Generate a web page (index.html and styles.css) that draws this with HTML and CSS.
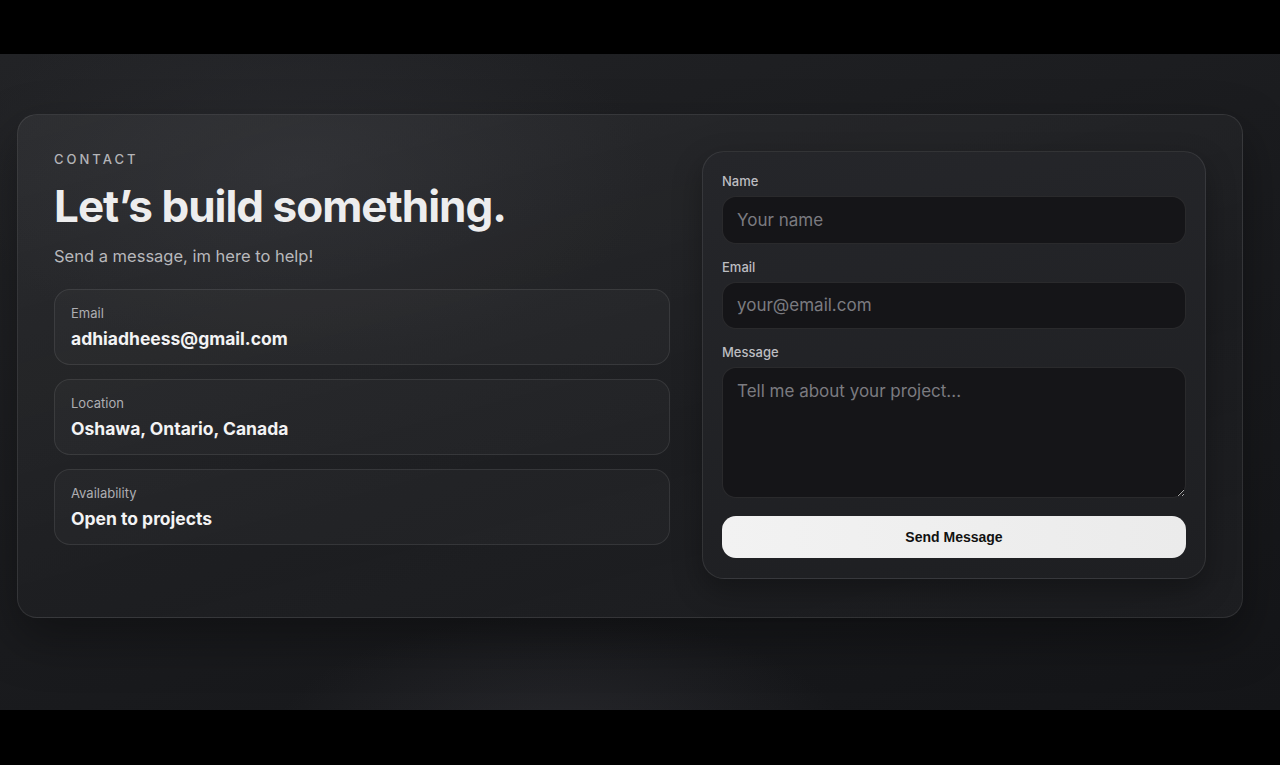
FILE: index.html
```html
<!DOCTYPE html>
<html lang="en">
<head>
    <meta charset="UTF-8">
    <meta name="viewport" content="width=device-width, initial-scale=1.0">
    <title>Contact</title>
    <link rel="stylesheet" href="styles.css">
</head>
<body>
    <section class="contact">
        <div class="card">
            <div class="intro">
                <p class="eyebrow">CONTACT</p>
                <h1>Let’s build something.</h1>
                <p class="lead">Send a message, im here to help!</p>

                <!-- Info tiles -->
                <div class="info-list">
                    <div class="info">
                        <span class="info-label">Email</span>
                        <span class="info-value">adhiadheess@gmail.com</span>
                    </div>
                    <div class="info">
                        <span class="info-label">Location</span>
                        <span class="info-value">Oshawa, Ontario, Canada</span>
                    </div>
                    <div class="info">
                        <span class="info-label">Availability</span>
                        <span class="info-value">Open to projects</span>
                    </div>
                </div>
            </div>

            <form class="form">
                <label for="name">Name</label>
                <input type="text" id="name" placeholder="Your name">

                <label for="email">Email</label>
                <input type="email" id="email" placeholder="your@email.com">

                <label for="message">Message</label>
                <textarea id="message" placeholder="Tell me about your project..."></textarea>

                <button type="submit">Send Message</button>
            </form>
        </div>
    </section>
</body>
</html>
```

FILE: styles.css
```css
* { box-sizing: border-box; margin: 0; }
body { background: #000; font-family: 'Inter', 'Noto Sans', sans-serif; color: #f1f1f1; }

.contact {
    margin: 54px 0 55px; height: 656px; padding: 60px 37px 0 17px;
    background:
        radial-gradient(ellipse 420px 200px at 560px 700px, rgba(60, 60, 66, 0.45), transparent 70%),
        radial-gradient(ellipse 500px 260px at 300px 120px, rgba(50, 51, 56, 0.5), transparent 70%),
        linear-gradient(160deg, #222326 0%, #1b1c1f 45%, #141518 100%);
}
.card {
    display: grid; grid-template-columns: 616px 504px; gap: 32px;
    height: 504px; padding: 36px 36px 0;
    border: 1px solid rgba(255, 255, 255, 0.09); border-radius: 20px;
    background: linear-gradient(165deg, rgba(255, 255, 255, 0.05), rgba(255, 255, 255, 0.015) 60%, rgba(255, 255, 255, 0.03));
    box-shadow: 0 20px 50px rgba(0, 0, 0, 0.35);
}

.eyebrow { font-size: 13px; font-weight: 500; letter-spacing: 3px; color: #b4b4b8; line-height: 16px; }
h1 { margin-top: 13px; font-size: 44px; font-weight: 700; letter-spacing: -1px; line-height: 52px; color: #ededee; }
.lead { margin-top: 13px; font-size: 16.5px; color: #b8b8bc; line-height: 22px; }

.info-list { display: grid; gap: 14px; margin-top: 22px; }
.info {
    display: flex; flex-direction: column; gap: 7px; height: 76px; padding: 15px 16px 0;
    border: 1px solid rgba(255, 255, 255, 0.09); border-radius: 16px;
    background: rgba(255, 255, 255, 0.025);
}
.info-label { font-size: 13px; color: #aeaeb2; line-height: 16px; }
.info-value { font-size: 17.5px; font-weight: 700; color: #f3f3f4; line-height: 22px; }

/* Form panel */
.form {
    display: flex; flex-direction: column; align-self: start;
    height: 428px; padding: 21px 19px 20px 19px;
    border: 1px solid rgba(255, 255, 255, 0.09); border-radius: 22px;
    background: linear-gradient(170deg, #25262a, #1e1f22);
    box-shadow: 0 12px 30px rgba(0, 0, 0, 0.3);
}
label { font-size: 13px; font-weight: 500; color: #bdbdc1; line-height: 16px; margin-bottom: 7px; }
input, textarea {
    width: 100%; padding: 12px 14px; font-family: inherit; font-size: 17px; color: #eee;
    background: #151518; border: 1px solid rgba(255, 255, 255, 0.09); border-radius: 14px; outline: none;
}
input { height: 48px; margin-bottom: 15px; }
textarea { height: 133px; resize: vertical; line-height: 22px; padding-top: 12px; }
input::placeholder, textarea::placeholder { color: #7b7b80; }

button {
    margin-top: 18px; height: 43px; border: none; border-radius: 14px; cursor: pointer;
    background: linear-gradient(90deg, #f2f2f2, #ebebeb);
    font-family: 'Liberation Sans', Arial, sans-serif; font-size: 14px; font-weight: 700; color: #111;
}
```
